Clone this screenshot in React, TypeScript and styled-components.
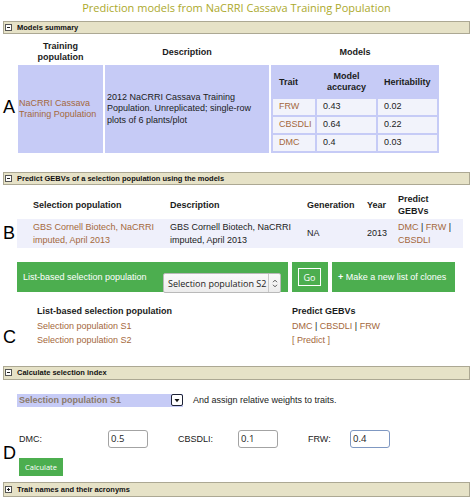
import React from 'react';
import styled, { createGlobalStyle } from 'styled-components';

const GlobalStyle = createGlobalStyle`
  body {
    margin: 0;
    background: #fff;
    font-family: "Liberation Sans", Arial, sans-serif;
    font-size: 9px;
    color: #1b1b1b;
  }
  th, td {
    box-sizing: border-box;
  }
`;

const LINK = '#a4683c';
const BLUE = '#c6cbf6';
const GREEN = '#4cae4f';

const Page = styled.div`
  width: 472px;
  height: 499px;
  box-sizing: border-box;
  padding: 0 2px 0 3px;
  overflow: hidden;
`;

const Title = styled.h1`
  margin: 0 0 7px;
  height: 14px;
  line-height: 14px;
  text-align: center;
  font: 400 11px "Open Sans", sans-serif;
  color: #aca92c;
`;

const SectionBar = styled.div<{ $height?: number; $top?: number }>`
  display: flex;
  align-items: center;
  gap: 5px;
  box-sizing: border-box;
  height: ${({ $height }) => $height ?? 13}px;
  margin-top: ${({ $top }) => $top ?? 0}px;
  padding-left: 1px;
  background: #e6e2c7;
  border: 1px solid #aca893;
  font: bold 7.5px "Liberation Sans", Arial, sans-serif;
  color: #111;
`;

const Block = styled.div<{ $top?: number }>`
  display: flex;
  align-items: flex-start;
  margin-top: ${({ $top }) => $top ?? 0}px;
`;

const Letter = styled.div<{ $top: number; $width?: number }>`
  flex: none;
  width: ${({ $width }) => $width ?? 14}px;
  padding-top: ${({ $top }) => $top}px;
  font: 400 18px/18px "Liberation Sans", Arial, sans-serif;
  color: #000;
`;

const Link = styled.span`
  color: ${LINK};
`;

/* ---- A: models summary ---- */

const SummaryTable = styled.table`
  border-collapse: separate;
  border-spacing: 2px 1px;
  table-layout: fixed;
  margin: 0 0 0 -1px;
`;

const HeadCell = styled.th<{ $width?: number }>`
  width: ${({ $width }) => ($width ? `${$width}px` : 'auto')};
  height: 24px;
  padding: 0;
  font-weight: bold;
  font-size: 9px;
  line-height: 11px;
  text-align: center;
  vertical-align: middle;
`;

const SummaryCell = styled.td<{ $pad?: number }>`
  height: 87px;
  padding: 0 0 0 ${({ $pad }) => $pad ?? 1}px;
  background: ${({ $pad }) => ($pad === 0 ? 'transparent' : BLUE)};
  line-height: 11.5px;
  vertical-align: middle;
`;

const ModelTable = styled.table`
  width: 100%;
  border-collapse: separate;
  border-spacing: 2px;
  table-layout: fixed;
  background: ${BLUE};
`;

const ModelHead = styled.th<{ $width: number; $center?: boolean }>`
  width: ${({ $width }) => $width}px;
  height: 30px;
  padding: 0 0 0 ${({ $center }) => ($center ? 0 : 6)}px;
  font-weight: bold;
  line-height: 11px;
  text-align: ${({ $center }) => ($center ? 'center' : 'left')};
  vertical-align: middle;
`;

const ModelCell = styled.td`
  height: 16px;
  padding: 0 0 0 6px;
  background: #f2f3fb;
  vertical-align: middle;
`;

/* ---- B: selection population ---- */

const GebvTable = styled.table`
  width: 446px;
  border-collapse: separate;
  border-spacing: 0 2px;
  table-layout: fixed;
`;

const GebvHead = styled.th<{ $width: number; $pad?: number }>`
  width: ${({ $width }) => $width}px;
  height: 24px;
  padding: 0 0 0 ${({ $pad }) => $pad ?? 4}px;
  font-weight: bold;
  line-height: 12px;
  text-align: left;
  vertical-align: middle;
`;

const GebvCell = styled.td<{ $pad?: number }>`
  height: 29px;
  padding: 0 0 0 ${({ $pad }) => $pad ?? 4}px;
  background: #eff0fb;
  line-height: 13px;
  vertical-align: middle;
`;

const ActionBar = styled.div`
  display: flex;
  gap: 4px;
  height: 30px;
  margin: 12px 0 0 14px;
`;

const Segment = styled.div<{ $width: number; $justify?: string }>`
  display: flex;
  align-items: center;
  justify-content: ${({ $justify }) => $justify ?? 'flex-start'};
  box-sizing: border-box;
  width: ${({ $width }) => $width}px;
  padding: 0 7px 0 6px;
  background: ${GREEN};
  color: #fff;
  font-size: 9px;
  white-space: nowrap;
`;

const FakeSelect = styled.div`
  display: flex;
  align-items: center;
  align-self: flex-end;
  box-sizing: border-box;
  width: 118px;
  height: 20px;
  margin-bottom: -1px;
  padding-left: 4px;
  background: linear-gradient(#fafafa, #ececec);
  border: 1px solid #b9b9b9;
  border-radius: 2px;
  color: #222;
  font: 400 9px "Open Sans", sans-serif;
  white-space: nowrap;
`;

const SelectArrows = styled.span`
  display: flex;
  align-items: center;
  justify-content: center;
  flex: none;
  width: 11px;
  height: 100%;
  margin-left: auto;
  border-left: 1px solid #c8c8c8;
`;

const GoBox = styled.div`
  display: flex;
  align-items: center;
  justify-content: center;
  width: 25px;
  height: 18px;
  box-sizing: border-box;
  border: 1px solid #fff;
  font: 400 9px "Open Sans", sans-serif;
`;

/* ---- C: list based ---- */

const ListTable = styled.table`
  border-collapse: collapse;
  table-layout: fixed;
`;

const ListCell = styled.td<{ $width?: number; $bold?: boolean }>`
  width: ${({ $width }) => ($width ? `${$width}px` : 'auto')};
  height: 14.5px;
  padding: 0 0 0 ${({ $width }) => ($width ? 20 : 0)}px;
  font-weight: ${({ $bold }) => ($bold ? 'bold' : 'normal')};
  line-height: 14.5px;
  vertical-align: middle;
`;

/* ---- D: selection index ---- */

const IndexBody = styled.div`
  display: flex;
  flex-direction: column;
`;

const PopRow = styled.div`
  display: flex;
  align-items: center;
  height: 13px;
`;

const PopSelect = styled.div`
  display: flex;
  align-items: center;
  box-sizing: border-box;
  width: 166px;
  height: 13px;
  padding-left: 2px;
  background: ${BLUE};
  color: #8b7a6a;
  font-weight: bold;
`;

const ArrowBox = styled.span`
  display: flex;
  align-items: center;
  justify-content: center;
  box-sizing: border-box;
  width: 12px;
  height: 12px;
  margin-left: auto;
  background: #fff;
  border: 1.5px solid #1d2235;
  border-radius: 2px;
`;

const Hint = styled.span`
  margin-left: 10px;
`;

const WeightRow = styled.div`
  display: flex;
  align-items: center;
  margin: 23px 0 0 2px;
`;

const WeightLabel = styled.label<{ $width: number }>`
  width: ${({ $width }) => $width}px;
  flex: none;
`;

const WeightInput = styled.input<{ $focus?: boolean }>`
  box-sizing: border-box;
  width: 40px;
  height: 18px;
  margin: 0 30px 0 0;
  padding: 0 0 0 2px;
  border: 1px solid ${({ $focus }) => ($focus ? '#7f98c2' : '#a3a3a3')};
  border-radius: 3px;
  font: 400 9.5px "Open Sans", sans-serif;
  color: #222;
  outline: none;
`;

const CalcButton = styled.button`
  align-self: flex-start;
  width: 44px;
  height: 18px;
  margin: 10px 0 0 2px;
  padding: 0;
  border: none;
  background: ${GREEN};
  color: #fff;
  font: 400 7.5px "Open Sans", sans-serif;
`;

const Toggle = ({ open }: { open: boolean }) => (
  <svg width="7" height="7" viewBox="0 0 7 7">
    <rect x="0.5" y="0.5" width="6" height="6" fill="#fff" stroke="#555" />
    <line x1="2" y1="3.5" x2="5" y2="3.5" stroke="#222" />
    {!open && <line x1="3.5" y1="2" x2="3.5" y2="5" stroke="#222" />}
  </svg>
);

const models = [
  { trait: 'FRW', accuracy: '0.43', h2: '0.02' },
  { trait: 'CBSDLI', accuracy: '0.64', h2: '0.22' },
  { trait: 'DMC', accuracy: '0.4', h2: '0.03' },
];

export default function App() {
  return (
    <Page>
      <GlobalStyle />
      <Title>Prediction models from NaCRRI Cassava Training Population</Title>

      <SectionBar>
        <Toggle open />
        Models summary
      </SectionBar>
      <Block $top={5}>
        <Letter $top={59}>A</Letter>
        <SummaryTable>
          <thead>
            <tr>
              <HeadCell $width={85}>
                Training
                <br />
                population
              </HeadCell>
              <HeadCell $width={164}>Description</HeadCell>
              <HeadCell $width={168}>Models</HeadCell>
            </tr>
          </thead>
          <tbody>
            <tr>
              <SummaryCell>
                <Link>
                  NaCRRI Cassava
                  <br />
                  Training Population
                </Link>
              </SummaryCell>
              <SummaryCell $pad={2}>
                2012 NaCRRI Cassava Training Population. Unreplicated; single-row plots of 6 plants/plot
              </SummaryCell>
              <SummaryCell $pad={0}>
                <ModelTable>
                  <thead>
                    <tr>
                      <ModelHead $width={42}>Trait</ModelHead>
                      <ModelHead $width={59} $center>
                        Model
                        <br />
                        accuracy
                      </ModelHead>
                      <ModelHead $width={59}>Heritability</ModelHead>
                    </tr>
                  </thead>
                  <tbody>
                    {models.map((m) => (
                      <tr key={m.trait}>
                        <ModelCell>
                          <Link>{m.trait}</Link>
                        </ModelCell>
                        <ModelCell>{m.accuracy}</ModelCell>
                        <ModelCell>{m.h2}</ModelCell>
                      </tr>
                    ))}
                  </tbody>
                </ModelTable>
              </SummaryCell>
            </tr>
          </tbody>
        </SummaryTable>
      </Block>

      <SectionBar $top={18}>
        <Toggle open />
        Predict GEBVs of a selection population using the models
      </SectionBar>
      <Block $top={6}>
        <Letter $top={33}>B</Letter>
        <GebvTable>
          <thead>
            <tr>
              <GebvHead $width={148} $pad={16}>Selection population</GebvHead>
              <GebvHead $width={138} $pad={5}>Description</GebvHead>
              <GebvHead $width={59}>Generation</GebvHead>
              <GebvHead $width={32} $pad={5}>Year</GebvHead>
              <GebvHead $width={69}>
                Predict
                <br />
                GEBVs
              </GebvHead>
            </tr>
          </thead>
          <tbody>
            <tr>
              <GebvCell $pad={16}>
                <Link>GBS Cornell Biotech, NaCRRI imputed, April 2013</Link>
              </GebvCell>
              <GebvCell $pad={5}>GBS Cornell Biotech, NaCRRI imputed, April 2013</GebvCell>
              <GebvCell>NA</GebvCell>
              <GebvCell $pad={5}>2013</GebvCell>
              <GebvCell>
                <Link>DMC</Link> | <Link>FRW</Link> | <Link>CBSDLI</Link>
              </GebvCell>
            </tr>
          </tbody>
        </GebvTable>
      </Block>

      <ActionBar>
        <Segment $width={271} $justify="space-between">
          List-based selection population
          <FakeSelect>
            Selection population S2
            <SelectArrows>
              <svg width="6" height="9" viewBox="0 0 6 9">
                <path d="M1 3.2 L3 1.2 L5 3.2 M1 5.8 L3 7.8 L5 5.8" fill="none" stroke="#555" strokeWidth="1" />
              </svg>
            </SelectArrows>
          </FakeSelect>
        </Segment>
        <Segment $width={36} $justify="center">
          <GoBox>Go</GoBox>
        </Segment>
        <Segment $width={123}>
          <b>+</b>&nbsp;Make a new list of clones
        </Segment>
      </ActionBar>

      <Block $top={12}>
        <Letter $top={24}>C</Letter>
        <ListTable>
          <tbody>
            <tr>
              <ListCell $width={275} $bold>List-based selection population</ListCell>
              <ListCell $bold>Predict GEBVs</ListCell>
            </tr>
            <tr>
              <ListCell $width={275}>
                <Link>Selection population S1</Link>
              </ListCell>
              <ListCell>
                <Link>DMC</Link> | <Link>CBSDLI</Link> | <Link>FRW</Link>
              </ListCell>
            </tr>
            <tr>
              <ListCell $width={275}>
                <Link>Selection population S2</Link>
              </ListCell>
              <ListCell>
                <Link>[ Predict ]</Link>
              </ListCell>
            </tr>
          </tbody>
        </ListTable>
      </Block>

      <SectionBar $top={18} $height={14}>
        <Toggle open />
        Calculate selection index
      </SectionBar>
      <Block $top={14}>
        <Letter $top={50} $width={14}>D</Letter>
        <IndexBody>
          <PopRow>
            <PopSelect>
              Selection population S1
              <ArrowBox>
                <svg width="6" height="5" viewBox="0 0 6 5">
                  <path d="M0.5 1 L5.5 1 L3 4.2 Z" fill="#111" />
                </svg>
              </ArrowBox>
            </PopSelect>
            <Hint>And assign relative weights to traits.</Hint>
          </PopRow>
          <WeightRow>
            <WeightLabel $width={89}>DMC:</WeightLabel>
            <WeightInput readOnly value="0.5" />
            <WeightLabel $width={60}>CBSDLI:</WeightLabel>
            <WeightInput readOnly value="0.1" />
            <WeightLabel $width={42}>FRW:</WeightLabel>
            <WeightInput readOnly value="0.4" $focus />
          </WeightRow>
          <CalcButton>Calculate</CalcButton>
        </IndexBody>
      </Block>

      <SectionBar $top={6} $height={15}>
        <Toggle open={false} />
        Trait names and their acronyms
      </SectionBar>
    </Page>
  );
}
